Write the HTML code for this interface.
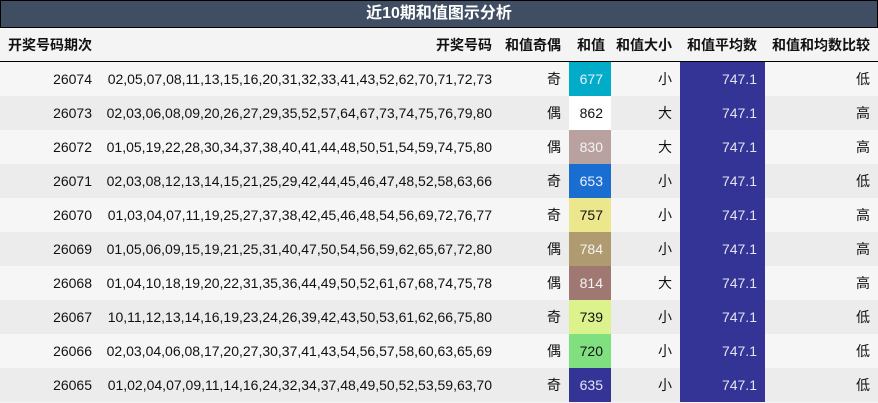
<!DOCTYPE html>
<html><head><meta charset="utf-8"><style>
body{margin:0;width:878px;height:403px;background:#f4f4f4;font-family:"Liberation Sans","Noto Sans CJK SC",sans-serif;font-size:14px;color:#111;overflow:hidden}
.t{background:#3f4e63;border:1px solid #000;box-sizing:border-box;color:#fff;font-weight:bold;font-size:16px;text-align:center;line-height:26px;height:28px}
table{border-collapse:collapse;width:878px;table-layout:fixed}
th{height:33px;font-weight:bold;font-size:14px;border-bottom:1px solid #000;padding:0 8px 0 0;text-align:right;white-space:nowrap;overflow:visible}
td{height:34px;padding:0 8px 0 0;text-align:right;white-space:nowrap}
tr:nth-child(even) td{background:#f6f6f6}
tr:nth-child(odd) td{background:#ececec}
td.a{background:#343496!important;color:#e4e4f4}
</style></head><body>
<div class="t">近10期和值图示分析</div>
<table>
<colgroup><col style="width:100px"><col style="width:400px"><col style="width:69px"><col style="width:42px"><col style="width:69px"><col style="width:85px"><col style="width:113px"></colgroup>
<tr><th style="text-align:left;padding-left:8px">开奖号码期次</th><th>开奖号码</th><th>和值奇偶</th><th style="padding:0 6px 0 0">和值</th><th>和值大小</th><th>和值平均数</th><th>和值和均数比较</th></tr>
<tr><td>26074</td><td>02,05,07,08,11,13,15,16,20,31,32,33,41,43,52,62,70,71,72,73</td><td>奇</td><td style="background:#00acc8;color:#eef">677</td><td>小</td><td class="a">747.1</td><td>低</td></tr>
<tr><td>26073</td><td>02,03,06,08,09,20,26,27,29,35,52,57,64,67,73,74,75,76,79,80</td><td>偶</td><td style="background:#fff">862</td><td>大</td><td class="a">747.1</td><td>高</td></tr>
<tr><td>26072</td><td>01,05,19,22,28,30,34,37,38,40,41,44,48,50,51,54,59,74,75,80</td><td>偶</td><td style="background:#b8a19e;color:#f4f4f4">830</td><td>大</td><td class="a">747.1</td><td>高</td></tr>
<tr><td>26071</td><td>02,03,08,12,13,14,15,21,25,29,42,44,45,46,47,48,52,58,63,66</td><td>奇</td><td style="background:#1a6ed2;color:#eef">653</td><td>小</td><td class="a">747.1</td><td>低</td></tr>
<tr><td>26070</td><td>01,03,04,07,11,19,25,27,37,38,42,45,46,48,54,56,69,72,76,77</td><td>奇</td><td style="background:#ece78c">757</td><td>小</td><td class="a">747.1</td><td>高</td></tr>
<tr><td>26069</td><td>01,05,06,09,15,19,21,25,31,40,47,50,54,56,59,62,65,67,72,80</td><td>偶</td><td style="background:#b09a70;color:#f4f4f4">784</td><td>小</td><td class="a">747.1</td><td>高</td></tr>
<tr><td>26068</td><td>01,04,10,18,19,20,22,31,35,36,44,49,50,52,61,67,68,74,75,78</td><td>偶</td><td style="background:#a07872;color:#f4f4f4">814</td><td>大</td><td class="a">747.1</td><td>高</td></tr>
<tr><td>26067</td><td>10,11,12,13,14,16,19,23,24,26,39,42,43,50,53,61,62,66,75,80</td><td>奇</td><td style="background:#dcf28c">739</td><td>小</td><td class="a">747.1</td><td>低</td></tr>
<tr><td>26066</td><td>02,03,04,06,08,17,20,27,30,37,41,43,54,56,57,58,60,63,65,69</td><td>偶</td><td style="background:#80e080">720</td><td>小</td><td class="a">747.1</td><td>低</td></tr>
<tr><td>26065</td><td>01,02,04,07,09,11,14,16,24,32,34,37,48,49,50,52,53,59,63,70</td><td>奇</td><td style="background:#343496;color:#e4e4f4">635</td><td>小</td><td class="a">747.1</td><td>低</td></tr>
</table>
</body></html>
